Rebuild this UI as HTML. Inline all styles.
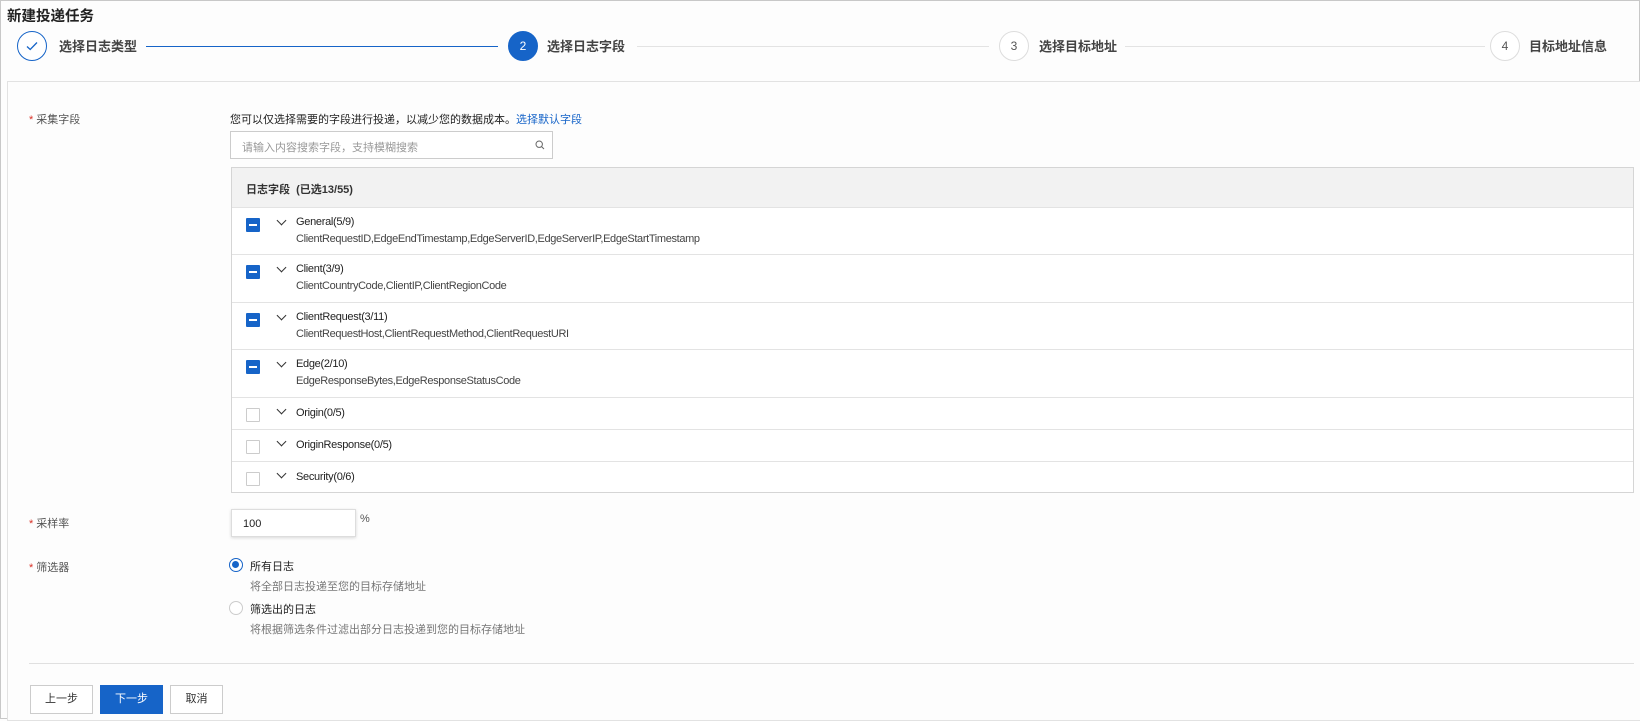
<!DOCTYPE html>
<html><head><meta charset="utf-8"><style>
*{box-sizing:border-box;margin:0;padding:0}
body{width:1640px;height:719px;background:#fdfdfd;font-family:"Liberation Sans","Noto Sans CJK SC",sans-serif;color:#333;position:relative;overflow:hidden;font-size:11px}
.frame{position:absolute;left:0;top:0;width:1640px;height:719px;border:1px solid #c8c8c8}
.abs{position:absolute;white-space:nowrap}
.title{left:7px;top:5px;font-size:14.5px;font-weight:bold;color:#222}
.circ{position:absolute;width:30px;height:30px;border-radius:50%;top:31px;text-align:center;line-height:28px;font-size:12px;color:#555;border:1px solid #ddd;background:#fff}
.stxt{position:absolute;top:36px;font-size:13px;font-weight:bold;color:#444}
.line{position:absolute;top:46px;height:1px;background:#e3e3e3}
.card{position:absolute;left:7px;top:81px;width:1640px;height:640px;border:1px solid #e2e2e2;background:#fdfdfd}
.lbl{font-size:11px;color:#555}
.lbl b{color:#d93026;font-weight:normal;margin-right:3px}
.tbl{position:absolute;left:231px;top:167px;width:1403px;height:326px;border:1px solid #d5d5d5;background:#fff}
.th{height:40px;background:#f2f2f2;border-bottom:1px solid #e3e3e3;padding:13px 0 0 14px;font-weight:bold;font-size:11px}
.row{position:relative;border-bottom:1px solid #e3e3e3}
.row:last-child{border-bottom:none}
.cb{position:absolute;left:14px;width:14px;height:14px;border:1px solid #ccc;background:#fff;border-radius:1px}
.cb.on{background:#1664c8;border-color:#1664c8}
.cb.on:after{content:"";position:absolute;left:2px;top:5px;width:8px;height:2px;background:#fff}
.chev{position:absolute;left:46px;width:7px;height:7px;border-right:1.5px solid #333;border-bottom:1.5px solid #333;transform:rotate(45deg)}
.rn{position:absolute;left:64px;font-size:11px;color:#222;letter-spacing:-0.3px}
.rs{position:absolute;left:64px;font-size:11px;color:#444;letter-spacing:-0.35px}
.btn{position:absolute;top:685px;height:29px;border:1px solid #ccc;background:#fff;text-align:center;line-height:27px;font-size:11px;color:#333}
</style></head><body>
<div class="frame"></div>
<div class="abs title">新建投递任务</div>
<div class="circ" style="left:17px;border-color:#1664c8;color:#1664c8"><svg width="14" height="14" viewBox="0 0 14 14" style="margin-top:7px"><path d="M2 7.5l3.2 3L12 3.5" fill="none" stroke="#1664c8" stroke-width="1.3"/></svg></div>
<div class="stxt" style="left:59px">选择日志类型</div>
<div class="line" style="left:146px;width:352px;background:#1664c8"></div>
<div class="circ" style="left:508px;background:#1664c8;border-color:#1664c8;color:#fff">2</div>
<div class="stxt" style="left:547px">选择日志字段</div>
<div class="line" style="left:637px;width:352px"></div>
<div class="circ" style="left:999px">3</div>
<div class="stxt" style="left:1039px">选择目标地址</div>
<div class="line" style="left:1125px;width:360px"></div>
<div class="circ" style="left:1490px">4</div>
<div class="stxt" style="left:1529px">目标地址信息</div>

<div class="card"></div>
<div class="abs lbl" style="left:29px;top:111px"><b>*</b>采集字段</div>
<div class="abs" style="left:230px;top:111px;color:#222">您可以仅选择需要的字段进行投递，以减少您的数据成本。<span style="color:#1664c8">选择默认字段</span></div>
<div class="abs" style="left:230px;top:131px;width:323px;height:28px;border:1px solid #ccc;background:#fff;color:#999;padding:7px 0 0 11px">请输入内容搜索字段，支持模糊搜索
<svg width="10" height="10" viewBox="0 0 10 10" style="position:absolute;right:7px;top:8px"><circle cx="4.2" cy="4.2" r="3.2" fill="none" stroke="#666" stroke-width="1"/><path d="M6.6 6.6L9 9" stroke="#666" stroke-width="1"/></svg></div>

<div class="tbl">
<div class="th">日志字段&nbsp;&nbsp;(已选13/55)</div>
<div class="row" style="height:47px"><div class="cb on" style="top:10px"></div><div class="chev" style="top:9px"></div><div class="rn" style="top:8px">General(5/9)</div><div class="rs" style="top:25px">ClientRequestID,EdgeEndTimestamp,EdgeServerID,EdgeServerIP,EdgeStartTimestamp</div></div>
<div class="row" style="height:48px"><div class="cb on" style="top:10px"></div><div class="chev" style="top:9px"></div><div class="rn" style="top:8px">Client(3/9)</div><div class="rs" style="top:25px">ClientCountryCode,ClientIP,ClientRegionCode</div></div>
<div class="row" style="height:47px"><div class="cb on" style="top:10px"></div><div class="chev" style="top:9px"></div><div class="rn" style="top:8px">ClientRequest(3/11)</div><div class="rs" style="top:25px">ClientRequestHost,ClientRequestMethod,ClientRequestURI</div></div>
<div class="row" style="height:48px"><div class="cb on" style="top:10px"></div><div class="chev" style="top:9px"></div><div class="rn" style="top:8px">Edge(2/10)</div><div class="rs" style="top:25px">EdgeResponseBytes,EdgeResponseStatusCode</div></div>
<div class="row" style="height:32px"><div class="cb" style="top:10px"></div><div class="chev" style="top:8px"></div><div class="rn" style="top:9px">Origin(0/5)</div></div>
<div class="row" style="height:32px"><div class="cb" style="top:10px"></div><div class="chev" style="top:8px"></div><div class="rn" style="top:9px">OriginResponse(0/5)</div></div>
<div class="row" style="height:31px"><div class="cb" style="top:10px"></div><div class="chev" style="top:8px"></div><div class="rn" style="top:9px">Security(0/6)</div></div>
</div>

<div class="abs lbl" style="left:29px;top:515px"><b>*</b>采样率</div>
<div class="abs" style="left:231px;top:509px;width:125px;height:28px;border:1px solid #ddd;background:#fff;box-shadow:0 1px 3px rgba(0,0,0,.15);padding:8px 0 0 11px;color:#222">100</div>
<div class="abs" style="left:360px;top:513px;color:#555">%</div>

<div class="abs lbl" style="left:29px;top:559px"><b>*</b>筛选器</div>
<div class="abs" style="left:229px;top:558px;width:14px;height:14px;border-radius:50%;border:1.5px solid #1664c8;background:#fff"><div style="width:7px;height:7px;border-radius:50%;background:#1664c8;margin:2px"></div></div>
<div class="abs" style="left:250px;top:558px;color:#222">所有日志</div>
<div class="abs" style="left:250px;top:578px;color:#777">将全部日志投递至您的目标存储地址</div>
<div class="abs" style="left:229px;top:601px;width:14px;height:14px;border-radius:50%;border:1px solid #ccc;background:#fff"></div>
<div class="abs" style="left:250px;top:601px;color:#222">筛选出的日志</div>
<div class="abs" style="left:250px;top:621px;color:#777">将根据筛选条件过滤出部分日志投递到您的目标存储地址</div>

<div class="abs" style="left:29px;top:663px;width:1605px;height:1px;background:#e0e0e0"></div>
<div class="btn" style="left:30px;width:63px">上一步</div>
<div class="btn" style="left:100px;width:63px;background:#1664c8;border-color:#1664c8;color:#fff">下一步</div>
<div class="btn" style="left:170px;width:53px">取消</div>
</body></html>
